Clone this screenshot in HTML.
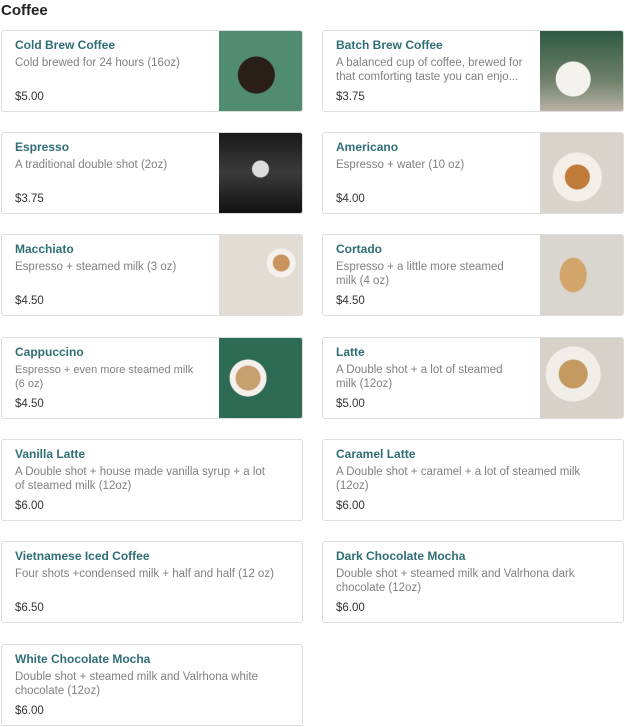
<!DOCTYPE html>
<html><head><meta charset="utf-8"><style>
*{box-sizing:border-box;margin:0;padding:0}
body{width:625px;height:727px;background:#fff;font-family:"Liberation Sans",sans-serif;position:relative;overflow:hidden}
h1{position:absolute;left:1px;top:2px;font-size:15px;font-weight:bold;color:#222}
.c{position:absolute;width:302px;height:82px;border:1px solid #ddd;border-radius:3px;overflow:hidden;background:#fff}
.t{position:absolute;left:13px;top:7px;font-size:12px;font-weight:bold;color:#2f6f74}
.d{position:absolute;left:13px;top:25px;font-size:11.5px;line-height:14px;color:#808080;white-space:nowrap}
.p{position:absolute;left:13px;top:60px;font-size:11.5px;color:#333}
.i{position:absolute;right:0;top:0;width:83px;height:100%}
</style></head><body>
<h1>Coffee</h1>
<div class="c" style="left:1px;top:30px"><div class="t">Cold Brew Coffee</div><div class="d">Cold brewed for 24 hours (16oz)</div><div class="p">$5.00</div><div class="i" style="background:radial-gradient(circle at 45% 55%,#2a1e18 0 18px,transparent 19px),#4f8c72"></div></div>
<div class="c" style="left:322px;top:30px"><div class="t">Batch Brew Coffee</div><div class="d">A balanced cup of coffee, brewed for<br>that comforting taste you can enjo...</div><div class="p">$3.75</div><div class="i" style="background:radial-gradient(circle at 40% 60%,#f4f2ee 0 17px,transparent 18px),linear-gradient(#2f5a43,#6d7f68 60%,#b8b2a6)"></div></div>
<div class="c" style="left:1px;top:132px"><div class="t">Espresso</div><div class="d">A traditional double shot (2oz)</div><div class="p">$3.75</div><div class="i" style="background:radial-gradient(circle at 50% 45%,#ddd 0 8px,transparent 9px),linear-gradient(#1a1a1a,#3b3b3b 50%,#111)"></div></div>
<div class="c" style="left:322px;top:132px"><div class="t">Americano</div><div class="d">Espresso + water (10 oz)</div><div class="p">$4.00</div><div class="i" style="background:radial-gradient(circle at 45% 55%,#c07a3a 0 12px,#f3efe8 13px 24px,transparent 25px),#d8d4cc"></div></div>
<div class="c" style="left:1px;top:234px"><div class="t">Macchiato</div><div class="d">Espresso + steamed milk (3 oz)</div><div class="p">$4.50</div><div class="i" style="background:radial-gradient(circle at 75% 35%,#c9935d 0 8px,#f4f1ec 9px 14px,transparent 15px),#e2ddd4"></div></div>
<div class="c" style="left:322px;top:234px"><div class="t">Cortado</div><div class="d">Espresso + a little more steamed<br>milk (4 oz)</div><div class="p">$4.50</div><div class="i" style="background:radial-gradient(ellipse 14px 18px at 40% 50%,#d2a56a 0 13px,transparent 14px),#d9d6d0"></div></div>
<div class="c" style="left:1px;top:337px"><div class="t">Cappuccino</div><div class="d" style="font-size:11px">Espresso + even more steamed milk<br>(6 oz)</div><div class="p">$4.50</div><div class="i" style="background:radial-gradient(circle at 35% 50%,#c8a070 0 12px,#f4f1ec 13px 18px,transparent 19px),#2d6b55"></div></div>
<div class="c" style="left:322px;top:337px"><div class="t">Latte</div><div class="d">A Double shot + a lot of steamed<br>milk (12oz)</div><div class="p">$5.00</div><div class="i" style="background:radial-gradient(circle at 40% 45%,#c49a60 0 14px,#f1eee9 15px 27px,transparent 28px),#d6d2ca"></div></div>
<div class="c" style="left:1px;top:439px"><div class="t">Vanilla Latte</div><div class="d">A Double shot + house made vanilla syrup + a lot<br>of steamed milk (12oz)</div><div class="p">$6.00</div></div>
<div class="c" style="left:322px;top:439px"><div class="t">Caramel Latte</div><div class="d">A Double shot + caramel + a lot of steamed milk<br>(12oz)</div><div class="p">$6.00</div></div>
<div class="c" style="left:1px;top:541px"><div class="t">Vietnamese Iced Coffee</div><div class="d">Four shots +condensed milk + half and half (12 oz)</div><div class="p">$6.50</div></div>
<div class="c" style="left:322px;top:541px"><div class="t">Dark Chocolate Mocha</div><div class="d">Double shot + steamed milk and Valrhona dark<br>chocolate (12oz)</div><div class="p">$6.00</div></div>
<div class="c" style="left:1px;top:644px"><div class="t">White Chocolate Mocha</div><div class="d">Double shot + steamed milk and Valrhona white<br>chocolate (12oz)</div><div class="p">$6.00</div></div>
</body></html>
